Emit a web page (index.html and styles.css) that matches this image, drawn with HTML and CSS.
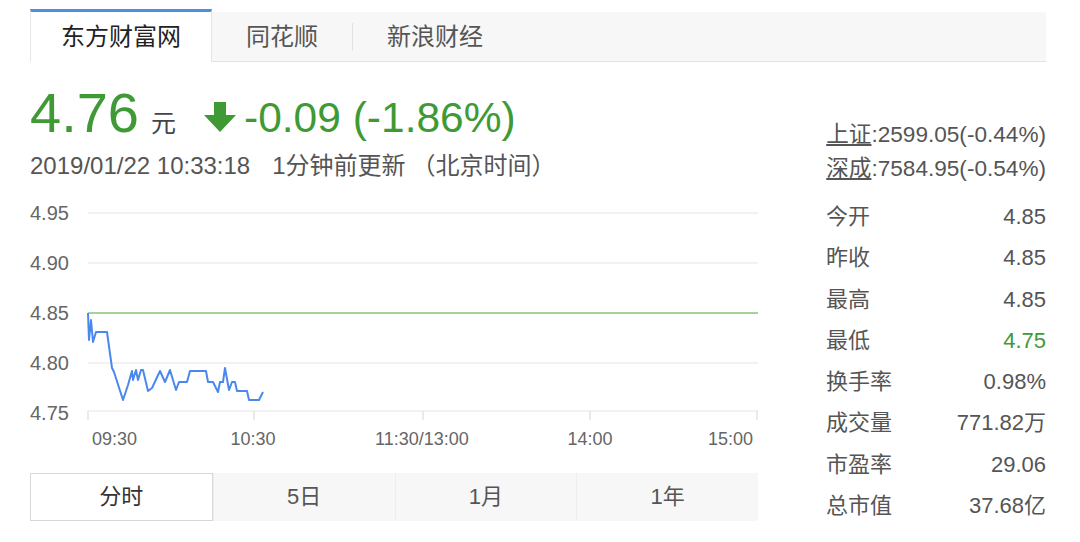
FILE: index.html
```html
<!DOCTYPE html>
<html lang="zh-CN">
<head>
    <meta charset="UTF-8">
    <meta name="viewport" content="width=device-width, initial-scale=1.0">
    <title>行情</title>
    <link rel="stylesheet" href="styles.css">
</head>
<body>
    <div class="page">
        <div class="tabs">
            <div class="tab active">东方财富网</div>
            <div class="tab">同花顺</div>
            <span class="tab-sep"></span>
            <div class="tab">新浪财经</div>
        </div>

        <div class="main">
            <div class="left">
                <div class="price-row">
                    <span class="price">4.76</span>
                    <span class="unit">元</span>
                    <svg class="arrow" width="32" height="30" viewBox="0 0 32 30">
                        <polygon points="10,0 22,0 22,13 32,13 16,30 0,13 10,13" fill="#3f9a36"/>
                    </svg>
                    <span class="change">-0.09 (-1.86%)</span>
                </div>
                <div class="date">2019/01/22 10:33:18<span class="gap">1分钟前更新</span><span class="zone">（北京时间）</span></div>

                <svg class="chart" width="728" height="265" viewBox="0 0 728 265">
                    <!-- 网格 -->
                    <g stroke="#eeeeee" stroke-width="1.5">
                        <line x1="58" y1="23" x2="728" y2="23"/>
                        <line x1="58" y1="73" x2="728" y2="73"/>
                        <line x1="58" y1="173" x2="728" y2="173"/>
                        <line x1="58" y1="221" x2="728" y2="221"/>
                    </g>
                    <g stroke="#e3e3e3" stroke-width="1.5">
                        <line x1="58" y1="221" x2="58" y2="230"/>
                        <line x1="224" y1="221" x2="224" y2="230"/>
                        <line x1="393" y1="221" x2="393" y2="230"/>
                        <line x1="560" y1="221" x2="560" y2="230"/>
                        <line x1="727" y1="221" x2="727" y2="230"/>
                    </g>
                    <!-- 昨收 -->
                    <line x1="58" y1="123" x2="728" y2="123" stroke="#86c578" stroke-width="1.5"/>

                    <g class="y-label">
                        <text x="0" y="30">4.95</text>
                        <text x="0" y="80">4.90</text>
                        <text x="0" y="130">4.85</text>
                        <text x="0" y="180">4.80</text>
                        <text x="0" y="230">4.75</text>
                    </g>
                    <g class="x-label">
                        <text x="62" y="255">09:30</text>
                        <text x="223" y="255" text-anchor="middle">10:30</text>
                        <text x="392" y="255" text-anchor="middle">11:30/13:00</text>
                        <text x="560" y="255" text-anchor="middle">14:00</text>
                        <text x="723" y="255" text-anchor="end">15:00</text>
                    </g>

                    <polyline fill="none" stroke="#4a88ee" stroke-width="2" stroke-linejoin="round"
                        points="58,123 59,150 61,130 63,152 66,142 77,142 82,178 84,182 93,210 98,195 102,181 103,190 106,180 108,190 111,180 113,180 118,201 122,198 130,181 135,192 140,180 146,200 149,192 157,192 160,181 176,181 178,192 183,192 188,202 190,192 193,192 195,178 199,200 202,192 205,192 207,201 217,201 219,210 229,210 233,202"/>
                </svg>

                <div class="ranges">
                    <div class="range active">分时</div>
                    <div class="range">5日</div>
                    <div class="range">1月</div>
                    <div class="range">1年</div>
                </div>
            </div>

            <div class="right">
                <div class="index">
                    <div><a class="index-name">上证</a>:2599.05(-0.44%)</div>
                    <div><a class="index-name">深成</a>:7584.95(-0.54%)</div>
                </div>
                <div class="stats">
                    <div class="stat"><span>今开</span><span>4.85</span></div>
                    <div class="stat"><span>昨收</span><span>4.85</span></div>
                    <div class="stat"><span>最高</span><span>4.85</span></div>
                    <div class="stat"><span>最低</span><span class="down">4.75</span></div>
                    <div class="stat"><span>换手率</span><span>0.98%</span></div>
                    <div class="stat"><span>成交量</span><span>771.82万</span></div>
                    <div class="stat"><span>市盈率</span><span>29.06</span></div>
                    <div class="stat"><span>总市值</span><span>37.68亿</span></div>
                </div>
            </div>
        </div>
    </div>
</body>
</html>
```

FILE: styles.css
```css
body {
    margin: 0;
    background: #fff;
    font-family: 'Liberation Sans', 'Noto Sans CJK SC', sans-serif;
    color: #555;
}

.page {
    width: 1016px;
    padding: 0 34px 0 30px;
}

.tabs {
    display: flex;
    align-items: stretch;
    height: 49px;
    margin-top: 12px;
    background: #f7f7f7;
    border-bottom: 1px solid #e2e2e2;
}

.tab {
    padding: 0 34px;
    font-size: 24px;
    line-height: 49px;
    color: #555;
}

.tab.active {
    padding: 0 30px;
    margin-top: -3px;
    margin-bottom: -1px;
    background: #fff;
    color: #222;
    border-top: 3px solid #4d8fe0;
    border-left: 1px solid #e6e6e6;
    border-right: 1px solid #e6e6e6;
}

.tab-sep {
    width: 1px;
    height: 28px;
    align-self: center;
    background: #e2e2e2;
}

.main {
    display: flex;
    gap: 68px;
}

.left {
    width: 728px;
}

.right {
    width: 220px;
    padding-top: 56px;
}

.price-row {
    display: flex;
    align-items: baseline;
    height: 60px;
    margin-top: 23px;
    line-height: 56px;
    color: #3f9a36;
}

.price {
    font-size: 56px;
}

.unit {
    margin-left: 12px;
    font-size: 25px;
    color: #444;
}

.arrow {
    margin-left: 28px;
    margin-right: 8px;
}

.change {
    font-size: 42.5px;
}

.date {
    margin-top: 7px;
    font-size: 24px;
    line-height: 28px;
    height: 28px;
    white-space: nowrap;
}

.gap {
    margin-left: 22px;
}

.zone {
    margin-left: 6px;
}

.chart {
    display: block;
    margin-top: 10px;
}

.y-label text {
    font-size: 20px;
    fill: #666;
}

.x-label text {
    font-size: 18px;
    fill: #666;
}

.ranges {
    display: flex;
    margin-top: 18px;
    height: 48px;
    background: #f7f7f7;
}

.range {
    flex: 1;
    text-align: center;
    font-size: 22px;
    line-height: 48px;
    color: #555;
    border-left: 1px solid #ededed;
}

.range.active {
    background: #fff;
    color: #333;
    border: 1px solid #d8d8d8;
    line-height: 46px;
}

.index {
    text-align: right;
    font-size: 22.6px;
    line-height: 34px;
    white-space: nowrap;
}

.index-name {
    text-decoration: underline;
    color: #555;
}

.stats {
    margin-top: 10px;
}

.stat {
    display: flex;
    justify-content: space-between;
    font-size: 22px;
    line-height: 41.3px;
}

.down {
    color: #3f9a36;
}
```
